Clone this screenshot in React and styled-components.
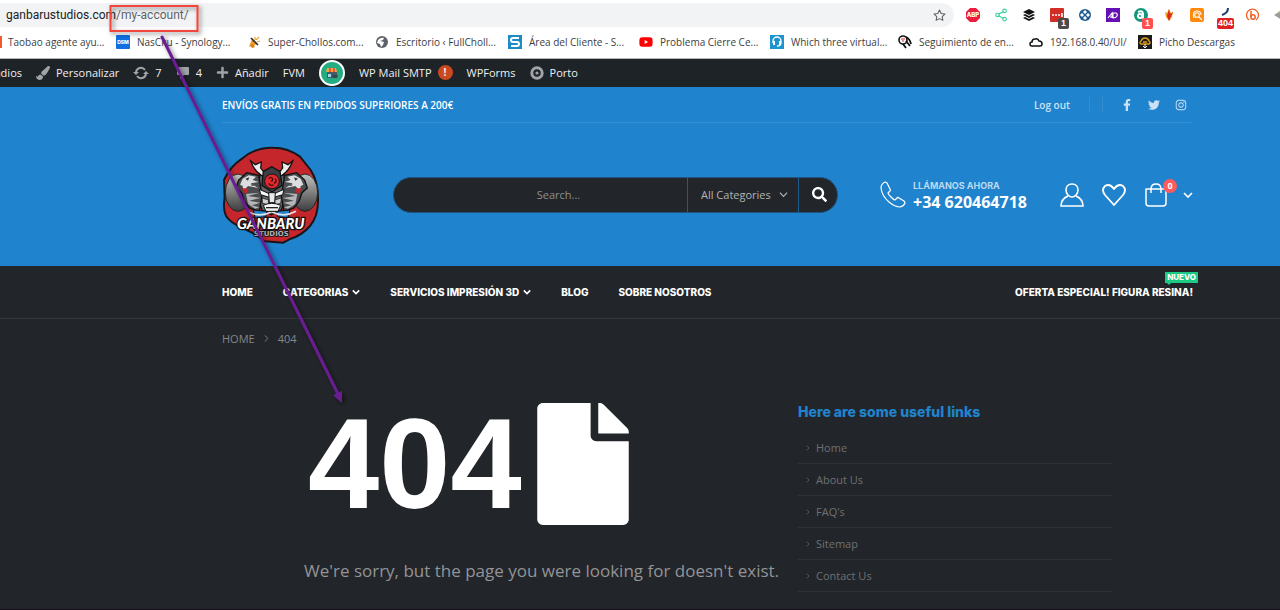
import styled, { createGlobalStyle, css } from 'styled-components';
import {
  FaFacebookF,
  FaTwitter,
  FaInstagram,
  FaSearch,
  FaPaintBrush,
  FaPlus,
  FaYoutube,
} from 'react-icons/fa';
import { FiStar, FiChevronRight, FiShare2 } from 'react-icons/fi';

const GlobalStyle = createGlobalStyle`
  * {
    box-sizing: border-box;
  }
  body {
    margin: 0;
    background: #222529;
    font-family: 'Open Sans', sans-serif;
    font-size: 11px;
  }
  a {
    color: inherit;
    text-decoration: none;
  }
  svg {
    display: block;
    flex: none;
  }
`;

const Page = styled.div`
  position: relative;
  min-height: 100vh;
  overflow: hidden;
  border-bottom: 1px solid #14101a;
`;

/* ---------- browser chrome ---------- */

const Chrome = styled.div`
  background: #fff;
  border-bottom: 1px solid #b4b6b8;
  overflow: hidden;
`;

const AddressRow = styled.div`
  display: flex;
  align-items: center;
  height: 30px;
`;

const AddressBar = styled.div`
  flex: 1;
  display: flex;
  align-items: center;
  justify-content: space-between;
  height: 24px;
  padding: 0 8px 0 6px;
  border-radius: 0 12px 12px 0;
  background: #f1f3f4;
  color: #5f6368;
  font: 12px Roboto, sans-serif;
`;

const Host = styled.span`
  color: #202124;
`;

const Extensions = styled.div`
  flex: none;
  display: flex;
  width: 326px;
  padding-left: 5px;
`;

const Extension = styled.button`
  position: relative;
  flex: none;
  display: flex;
  align-items: center;
  justify-content: center;
  width: 28px;
  height: 24px;
  padding: 0;
  border: 0;
  background: none;
`;

const ExtensionBadge = styled.span`
  position: absolute;
  right: ${({ $wide }) => ($wide ? '5px' : '2px')};
  bottom: -2px;
  padding: 0 ${({ $wide }) => ($wide ? '1px' : '3px')};
  border-radius: 2px;
  background: ${({ $bg }) => $bg};
  color: #fff;
  font-size: 9px;
  font-weight: 700;
  line-height: 11px;
`;

const Bookmarks = styled.nav`
  display: flex;
  align-items: center;
  height: 28px;
  padding-bottom: 4px;
  color: #3c4043;
  font-size: 10px;
`;

const Bookmark = styled.a`
  flex: none;
  display: flex;
  align-items: center;
  gap: 7px;
  width: ${({ $width }) => $width}px;
  white-space: nowrap;
`;

const FirstBookmark = styled(Bookmark)`
  gap: 6px;
`;

/* ---------- WordPress admin bar ---------- */

const AdminBar = styled.nav`
  display: flex;
  align-items: center;
  gap: 14px;
  height: 28px;
  background: #1d2327;
  color: #f0f0f1;
`;

const AdminItem = styled.a`
  display: flex;
  align-items: center;
  gap: 6px;
  line-height: 14px;
  padding-bottom: 1px;
  white-space: nowrap;
  svg {
    color: #a0a3a8;
  }
`;

const SiteItem = styled(AdminItem)`
  justify-content: flex-end;
  width: 22px;
  overflow: hidden;
`;

const StoreIcon = styled.span`
  display: flex;
  align-items: center;
  justify-content: center;
  width: 26px;
  height: 26px;
  border: 2px solid #fff;
  border-radius: 50%;
  background: #23ad80;
`;

const Alert = styled.span`
  width: 15px;
  border-radius: 8px;
  background: #ca4a1f;
  font-size: 10px;
  font-weight: 700;
  line-height: 15px;
  text-align: center;
`;

/* ---------- site header ---------- */

const container = css`
  padding-left: 222px;
  padding-right: 87px;
`;

const Header = styled.header`
  ${container}
  background: #2083ce;
  color: #fff;
`;

const TopBar = styled.div`
  display: flex;
  align-items: center;
  justify-content: space-between;
  height: 36px;
  border-bottom: 1px solid #338ed2;
  font-size: 10px;
  font-weight: 600;
`;

const TopLinks = styled.div`
  display: flex;
  align-items: center;
  padding-right: 6px;
  color: #cbe2f4;
`;

const LogOut = styled.a`
  padding-right: 19px;
`;

const Separators = styled.span`
  width: 14px;
  height: 16px;
  border: solid #338ed2;
  border-width: 0 1px;
`;

const Social = styled.div`
  display: flex;
  gap: 15px;
  padding-left: 18px;
`;

const HeaderMain = styled.div`
  display: flex;
  align-items: center;
  height: 143px;
`;

const SearchForm = styled.form`
  display: flex;
  width: 445px;
  height: 36px;
  margin-left: 73px;
  border: 1px solid #1f5580;
  border-radius: 18px;
  background: #222529;
  overflow: hidden;
`;

const SearchInput = styled.input`
  flex: 1;
  min-width: 0;
  padding: 0 0 0 36px;
  border: 0;
  background: none;
  color: #fff;
  font: 11px 'Open Sans', sans-serif;
  text-align: center;
  &::placeholder {
    color: #8d8f92;
  }
`;

const CategoryBox = styled.label`
  display: grid;
  grid-template-columns: 1fr 9px;
  align-items: center;
  width: 112px;
  padding: 0 10px 0 13px;
  border: solid #1c5b8b;
  border-width: 0 1px;
  color: #b2b4b6;
  svg {
    grid-area: 1 / 2;
    pointer-events: none;
  }
`;

const CategorySelect = styled.select`
  grid-area: 1 / 1 / 2 / 3;
  width: 100%;
  height: 34px;
  padding: 0;
  border: 0;
  appearance: none;
  background: none;
  color: inherit;
  font: 11px 'Open Sans', sans-serif;
`;

const IconButton = styled.button`
  display: flex;
  align-items: center;
  justify-content: center;
  padding: 0;
  border: 0;
  background: none;
  color: #fff;
`;

const SearchButton = styled(IconButton)`
  width: 38px;
  height: 34px;
  padding-left: 3px;
`;

const HeaderTools = styled.div`
  display: flex;
  align-items: center;
  margin-left: auto;
`;

const Phone = styled.a`
  display: flex;
  align-items: center;
  gap: 7px;
  width: 180px;
  white-space: nowrap;
`;

const PhoneLabel = styled.span`
  display: block;
  color: #bcdaf0;
  font: 700 9px/14px Inter, sans-serif;
`;

const PhoneNumber = styled.strong`
  display: block;
  font-size: 16px;
  line-height: 18px;
`;

const ToolIcons = styled.div`
  display: flex;
  align-items: center;
  gap: 18px;
`;

const Cart = styled(IconButton)`
  position: relative;
  gap: 15px;
`;

const CartCount = styled.span`
  position: absolute;
  top: -4px;
  left: 19px;
  width: 14px;
  border-radius: 50%;
  background: #ff5b5b;
  font: 700 9px/14px 'Open Sans', sans-serif;
`;

/* ---------- navigation ---------- */

const MainNav = styled.nav`
  ${container}
  display: flex;
  align-items: center;
  gap: 30px;
  height: 53px;
  border-bottom: 1px solid #34373b;
  color: #fff;
  font: 800 10px/16px Inter, sans-serif;
`;

const NavLink = styled.a`
  display: flex;
  align-items: center;
  gap: 4px;
  white-space: nowrap;
`;

const Offer = styled(NavLink)`
  position: relative;
  margin-left: auto;
`;

const NewTag = styled.span`
  position: absolute;
  top: -12px;
  right: -5px;
  padding: 0 2px;
  background: #1ccb83;
  font-size: 8px;
  line-height: 11px;
  &::after {
    content: '';
    position: absolute;
    top: 11px;
    left: 2px;
    border: solid transparent;
    border-width: 0 2px;
    border-top: 2px solid #1ccb83;
  }
`;

const Breadcrumb = styled.nav`
  ${container}
  display: flex;
  align-items: center;
  gap: 6px;
  height: 38px;
  color: #85878a;
`;

/* ---------- 404 content ---------- */

const Main = styled.main`
  display: flex;
  padding: 46px 168px 16px 304px;
`;

const NotFound = styled.section`
  flex: 1;
  min-width: 0;
`;

const Code = styled.h1`
  display: flex;
  align-items: center;
  gap: 15px;
  height: 122px;
  margin: 0;
  padding-left: 4px;
  color: #fff;
  font: 700 128px/122px 'Liberation Sans', sans-serif;
`;

const Message = styled.p`
  margin: 32px 0 0;
  color: #929497;
  font-size: 17px;
  line-height: 28px;
  white-space: nowrap;
`;

const Useful = styled.aside`
  flex: none;
  width: 314px;
`;

const UsefulTitle = styled.h2`
  margin: 0 0 11px;
  color: #2083ce;
  font: 800 14px/18px Inter, sans-serif;
`;

const UsefulList = styled.ul`
  margin: 0;
  padding: 0;
  list-style: none;
`;

const UsefulItem = styled.li`
  border-bottom: 1px solid #2e3135;
  a {
    display: flex;
    align-items: center;
    gap: 4px;
    height: 31px;
    padding-left: 6px;
    color: #6e7174;
  }
`;

/* arrow and box drawn over the page */
const Markup = styled.svg`
  position: absolute;
  top: 0;
  left: 0;
  pointer-events: none;
`;

const Chevron = ({ width = 8, weight = 2 }) => (
  <svg width={width} height={width} viewBox="0 0 10 10" fill="none" stroke="currentColor" strokeWidth={weight}>
    <path d="M1 3 L5 7 L9 3" />
  </svg>
);

function Logo() {
  const half = (
    <>
      <path d="M150 102 L130 98 Q108 84 98 55 L112 66 L130 58 L128 76 Q138 92 152 92Z" fill="#ececec" stroke="#111" strokeWidth="4" />
      <path d="M122 98 L86 90 L62 112 L54 136 L70 150 L78 174 L94 196 L124 206 L132 160Z" fill="#4a4c4f" stroke="#111" strokeWidth="4" />
      <path d="M66 126 L74 108 L92 98 L114 102 L104 112 L122 118 L98 122 L120 136 L90 130 L76 144 L74 130Z" fill="#dcddde" />
      <path d="M82 108 L94 104 L90 114Z M98 124 L110 128 L102 130Z" fill="#333" />
      <path d="M84 154 L126 150 L90 160 L128 166 L94 174 L126 180 L102 188 L124 194 L112 198 L90 184Z" fill="#b5b7b9" />
      <path d="M72 136 L90 138 L88 152 L76 150Z" fill="#c5262c" />
      <path d="M124 140 L156 154 L154 164 L128 156Z" fill="#f6f6f6" stroke="#111" strokeWidth="3" />
      <path d="M132 166 L152 172 L150 186 L134 182Z" fill="#cfd0d1" stroke="#111" strokeWidth="2" />
      <path d="M106 202 L146 206 L144 222 L112 226Z" fill="#2083ce" stroke="#111" strokeWidth="3" />
      <path d="M88 206 Q124 226 160 208" fill="none" stroke="#e3e3e3" strokeWidth="5" />
    </>
  );
  return (
    <svg width="98" height="98" viewBox="12 10 294 294" role="img" aria-label="Ganbaru Studios">
      <defs>
        <linearGradient id="drum" x1="0" y1="0" x2="0" y2="1">
          <stop offset="0" stopColor="#c3c3c3" />
          <stop offset="1" stopColor="#3c3c3e" />
        </linearGradient>
      </defs>
      <path d="M72 48 Q112 13 166 15 Q210 15 246 42 L278 82 Q300 116 300 166 Q302 220 276 250 Q250 280 214 290 L196 300 L140 296 L110 274 L66 252 Q38 240 24 220 Q14 196 20 166 L18 112 Q36 72 72 48Z" fill="#c5262c" stroke="#15171b" strokeWidth="6" strokeLinejoin="round" />
      <ellipse cx="60" cy="150" rx="38" ry="56" fill="url(#drum)" stroke="#222" strokeWidth="3" />
      <ellipse cx="261" cy="150" rx="38" ry="56" fill="url(#drum)" stroke="#222" strokeWidth="3" />
      <path d="M126 96 L198 96 L206 152 L190 202 L160 216 L132 202 L116 152Z" fill="#606265" stroke="#111" strokeWidth="4" />
      {half}
      <g transform="translate(322 0) scale(-1 1)">{half}</g>
      <path d="M136 86 L161 72 L186 86 L192 128 L162 148 L132 128Z" fill="#3c3e41" stroke="#111" strokeWidth="4" />
      <circle cx="162" cy="116" r="22" fill="#e3282e" stroke="#201014" strokeWidth="3" />
      <path d="M152 108 q6 -8 12 0 q0 6 -4 8 M172 108 q6 10 -4 14 M152 122 q6 10 14 4" fill="none" stroke="#3a1013" strokeWidth="4" />
      <path d="M152 150 L172 150 L170 180 L154 180Z" fill="#e8e9ea" stroke="#111" strokeWidth="3" />
      <path d="M136 188 Q160 176 188 188 L180 206 L144 206Z" fill="#f4f4f4" stroke="#111" strokeWidth="3" />
      <path d="M144 195 H180" stroke="#222" strokeWidth="4" />
      <text x="158" y="258" textAnchor="middle" fill="#fff" stroke="#111" strokeWidth="8" paintOrder="stroke" fontFamily="Lato, sans-serif" fontSize="44" fontWeight="900" fontStyle="italic">GANBARU</text>
      <text x="160" y="281" textAnchor="middle" fill="#b0b0b2" stroke="#111" strokeWidth="5" paintOrder="stroke" fontFamily="DejaVu Sans, sans-serif" fontSize="21" fontWeight="700">STUDIOS</text>
    </svg>
  );
}

const SynologyIcon = () => (
  <svg width="14" height="14" viewBox="0 0 14 14">
    <rect width="14" height="14" rx="1" fill="#0f6fe0" />
    <text x="7" y="9" textAnchor="middle" fill="#fff" fontFamily="Inter, sans-serif" fontSize="5" fontWeight="800">DSM</text>
  </svg>
);

const MegaphoneIcon = () => (
  <svg width="14" height="14" viewBox="0 0 14 14">
    <path d="M5 4 L10 9 L2 12Z" fill="#f29a1f" />
    <path d="M3 10 L5 13 L8 12 L6 9Z" fill="#e07b12" />
    <path d="M4 3 L11 10" stroke="#2a2e38" strokeWidth="1.6" />
    <path d="M8 2 L8 5 M12 2 L9 5 M13 6 L10 7" stroke="#f0a22b" strokeWidth="1.2" />
  </svg>
);

const GlobeIcon = () => (
  <svg width="14" height="14" viewBox="0 0 14 14">
    <circle cx="7" cy="7" r="6" fill="#5f6368" />
    <path d="M3 5 Q6 2 9 3 L8 5 L5 6 L9 7 L8 10 L6 12 L5 9 L2 8Z" fill="#fff" />
  </svg>
);

const SIcon = () => (
  <svg width="14" height="14" viewBox="0 0 14 14">
    <rect width="14" height="14" fill="#1d8cc4" />
    <path d="M11 3 H5 Q3 3 3 5 Q3 7 5 7 H9 Q11 7 11 9 Q11 11 9 11 H3" fill="none" stroke="#fff" strokeWidth="2" />
  </svg>
);

const HeadsetIcon = () => (
  <svg width="14" height="14" viewBox="0 0 14 14">
    <rect width="14" height="14" fill="#1d93cf" />
    <path d="M3 8 V6 a4 4 0 0 1 8 0 V8 q0 3 -4 3" fill="none" stroke="#fff" strokeWidth="1.3" />
    <path d="M3 6 h2 v4 h-2Z M9 6 h2 v4 h-2Z" fill="#fff" />
  </svg>
);

const TrackIcon = () => (
  <svg width="14" height="14" viewBox="0 0 14 14" fill="none" stroke="#111">
    <circle cx="5" cy="5" r="4" strokeWidth="1.6" />
    <path d="M5 9 L8 13 M8 2 Q12 4 13 9 M8 6 L12 11" strokeWidth="1.8" />
    <path d="M3 4 h4 M4 6 h2" stroke="#e0252b" strokeWidth="1.2" />
  </svg>
);

const CloudIcon = () => (
  <svg width="14" height="14" viewBox="0 0 14 14" fill="none" stroke="#111" strokeWidth="1.5">
    <path d="M3 11 Q1 11 1 9 Q1 7 3 7 Q3 4 6 4 Q9 3 10 6 Q13 6 13 9 Q13 11 11 11Z" />
  </svg>
);

const PichoIcon = () => (
  <svg width="14" height="14" viewBox="0 0 14 14">
    <rect width="14" height="14" fill="#1c1c1c" />
    <path d="M3 9 Q1 8 3 6 Q4 3 7 3 Q10 3 11 6 Q13 8 11 9Z" fill="none" stroke="#d99b1c" strokeWidth="1.4" />
    <path d="M5 7 h4" stroke="#d99b1c" strokeWidth="1.6" />
    <path d="M7 9 v3 M5 11 l2 2 l2 -2" stroke="#eee" fill="none" />
  </svg>
);

const bookmarks = [
  { label: 'NasCku - Synology...', icon: <SynologyIcon />, width: 131 },
  { label: 'Super-Chollos.com...', icon: <MegaphoneIcon />, width: 128 },
  { label: 'Escritorio ‹ FullCholl...', icon: <GlobeIcon />, width: 133 },
  { label: 'Área del Cliente - S...', icon: <SIcon />, width: 131 },
  { label: 'Problema Cierre Ce...', icon: <FaYoutube size={14} color="#f00" />, width: 131 },
  { label: 'Which three virtual...', icon: <HeadsetIcon />, width: 128 },
  { label: 'Seguimiento de en...', icon: <TrackIcon />, width: 131 },
  { label: '192.168.0.40/UI/', icon: <CloudIcon />, width: 109 },
  { label: 'Picho Descargas', icon: <PichoIcon />, width: 109 },
];

const extensions = [
  {
    name: 'Adblock Plus',
    icon: (
      <svg width="14" height="14" viewBox="0 0 14 14">
        <path d="M4 0 H10 L14 4 V10 L10 14 H4 L0 10 V4Z" fill="#ec1c3c" />
        <text x="7" y="9" textAnchor="middle" fill="#fff" fontFamily="Inter, sans-serif" fontSize="6" fontWeight="800">ABP</text>
      </svg>
    ),
  },
  { name: 'Share', icon: <FiShare2 size={14} color="#3fcf9b" /> },
  {
    name: 'Buffer',
    icon: (
      <svg width="14" height="14" viewBox="0 0 14 14" fill="#111">
        <path d="M7 1 L13 4 L7 7 L1 4Z" />
        <path d="M1 7 L3 6 L7 8 L11 6 L13 7 L7 10Z M1 10 L3 9 L7 11 L11 9 L13 10 L7 13Z" />
      </svg>
    ),
  },
  {
    name: 'LastPass',
    icon: (
      <svg width="14" height="14" viewBox="0 0 14 14">
        <rect width="14" height="14" rx="1" fill="#d32d27" />
        <path d="M2 7 h2 M5 7 h2 M8 7 h2 M12 5 v4" stroke="#fff" strokeWidth="1.6" />
      </svg>
    ),
    badge: { text: '1', bg: '#4a4a4a' },
  },
  {
    name: 'Guard',
    icon: (
      <svg width="14" height="14" viewBox="0 0 14 14">
        <circle cx="7" cy="7" r="6" fill="#1f5c8f" />
        <path d="M7 2 l2 2 l-2 2 l-2 -2Z M7 8 l2 2 l-2 2 l-2 -2Z M4 5 l2 2 l-2 2 l-2 -2Z M10 5 l2 2 l-2 2 l-2 -2Z" fill="#fff" />
      </svg>
    ),
  },
  {
    name: 'AD',
    icon: (
      <svg width="14" height="14" viewBox="0 0 14 14">
        <rect width="14" height="14" fill="#6410b4" />
        <path d="M2 10 L6 5 V10 M4 9 H6 M7 5 H10 Q12 6 11 8 Q10 10 7 10Z" fill="none" stroke="#fff" strokeWidth="1.1" />
      </svg>
    ),
  },
  {
    name: 'Alexa',
    icon: (
      <svg width="14" height="14" viewBox="0 0 14 14" fill="none" stroke="#fff" strokeWidth="2">
        <circle cx="7" cy="7" r="7" fill="#12957d" stroke="none" />
        <path d="M4 4 Q9 2 9 6 V11" />
        <circle cx="6" cy="8" r="2" />
      </svg>
    ),
    badge: { text: '1', bg: '#ff4f4f' },
  },
  {
    name: 'Flame',
    icon: (
      <svg width="14" height="14" viewBox="0 0 14 14">
        <path d="M7 1 L9 5 L11 4 L10 9 L7 13 L4 9 L3 4 L5 5Z" fill="#f2a01e" />
        <path d="M7 1 L8 6 L11 4 L7 13 L5 8Z" fill="#da2c1e" />
      </svg>
    ),
  },
  {
    name: 'Finder',
    icon: (
      <svg width="14" height="14" viewBox="0 0 14 14" fill="none" stroke="#fff">
        <rect width="14" height="14" rx="2" fill="#ff8a0d" stroke="none" />
        <path d="M4 10 Q2 3 7 3 Q11 3 11 7 M9 9 L12 12" strokeWidth="1.1" />
        <circle cx="7" cy="7" r="2.3" strokeWidth="1.1" />
      </svg>
    ),
  },
  {
    name: 'Broken links',
    icon: (
      <svg width="14" height="14" viewBox="0 0 14 14">
        <path d="M10 0 Q10 5 4 7" fill="none" stroke="#1d3f6e" strokeWidth="2" />
      </svg>
    ),
    badge: { text: '404', bg: '#e02020', wide: true },
  },
  {
    name: 'Bitly',
    icon: (
      <svg width="14" height="14" viewBox="0 0 14 14" fill="none" stroke="#ee6123">
        <path d="M3 12 A6 6 0 1 1 10 12" strokeWidth="1.3" />
        <path d="M5 3 V9" strokeWidth="1.5" />
        <circle cx="7" cy="9" r="2.2" strokeWidth="1.5" />
      </svg>
    ),
  },
  {
    name: 'More',
    icon: (
      <svg width="14" height="14" viewBox="0 0 14 14">
        <path d="M0 7 L8 2 V12Z" fill="#9a9c9a" />
        <path d="M4 4 L10 0 V7Z" fill="#b9cf4a" />
      </svg>
    ),
  },
];

const usefulLinks = ['Home', 'About Us', "FAQ's", 'Sitemap', 'Contact Us'];

function BrowserChrome() {
  return (
    <Chrome>
      <AddressRow>
        <AddressBar>
          <span><Host>ganbarustudios.com</Host>/my-account/</span>
          <FiStar size={13} />
        </AddressBar>
        <Extensions>
          {extensions.map(({ name, icon, badge }) => (
            <Extension key={name} aria-label={name}>
              {icon}
              {badge && <ExtensionBadge $bg={badge.bg} $wide={badge.wide}>{badge.text}</ExtensionBadge>}
            </Extension>
          ))}
        </Extensions>
      </AddressRow>
      <Bookmarks>
        <FirstBookmark href="#taobao" $width={116}>
          <svg width="2" height="12"><rect width="2" height="12" fill="#f0592a" /></svg>
          Taobao agente ayu...
        </FirstBookmark>
        {bookmarks.map(({ label, icon, width }) => (
          <Bookmark key={label} href="#bookmark" $width={width}>
            {icon}
            {label}
          </Bookmark>
        ))}
      </Bookmarks>
    </Chrome>
  );
}

function WpAdminBar() {
  return (
    <AdminBar>
      <SiteItem href="#site">udios</SiteItem>
      <AdminItem href="#customize"><FaPaintBrush size={14} />Personalizar</AdminItem>
      <AdminItem href="#updates">
        <svg width="16" height="14" viewBox="0 0 16 14" fill="none" stroke="currentColor" strokeWidth="2">
          <path d="M3 6 A5 5 0 0 1 12 4 M13 8 A5 5 0 0 1 4 10" />
          <path d="M0 6 H6 L3 9Z M10 8 H16 L13 5Z" fill="currentColor" stroke="none" />
        </svg>
        7
      </AdminItem>
      <AdminItem href="#comments">
        <svg width="14" height="14" viewBox="0 0 14 14" fill="currentColor">
          <path d="M2 1 H12 Q13 1 13 2 V8 Q13 9 12 9 H8 L4 13 V9 H2 Q1 9 1 8 V2 Q1 1 2 1Z" />
        </svg>
        4
      </AdminItem>
      <AdminItem href="#new"><FaPlus size={13} />Añadir</AdminItem>
      <AdminItem href="#fvm">FVM</AdminItem>
      <StoreIcon>
        <svg width="14" height="12" viewBox="0 0 14 12">
          <rect x="2" y="5" width="10" height="6" fill="#455a64" />
          <path d="M2 1 H11 L12 5 H1Z" fill="#f2a73b" />
          <path d="M4 1 H6 V5 H4Z M8 1 H10 V5 H8Z" fill="#e9573f" />
          <path d="M3 7 h3 v3 h-3Z" fill="#9fd6f2" />
          <path d="M7 8 h6 l-1 3 h-4Z" fill="#37474f" />
        </svg>
      </StoreIcon>
      <AdminItem href="#mail">WP Mail SMTP<Alert>!</Alert></AdminItem>
      <AdminItem href="#forms">WPForms</AdminItem>
      <AdminItem href="#porto">
        <svg width="14" height="14" viewBox="0 0 14 14" fill="none" stroke="currentColor">
          <circle cx="7" cy="7" r="5.2" strokeWidth="3" />
          <circle cx="7" cy="7" r="1.6" fill="currentColor" stroke="none" />
        </svg>
        Porto
      </AdminItem>
    </AdminBar>
  );
}

function SiteHeader() {
  return (
    <Header>
      <TopBar>
        <span>ENVÍOS GRATIS EN PEDIDOS SUPERIORES A 200€</span>
        <TopLinks>
          <LogOut href="#logout">Log out</LogOut>
          <Separators />
          <Social>
            <a href="#facebook" aria-label="Facebook"><FaFacebookF size={12} /></a>
            <a href="#twitter" aria-label="Twitter"><FaTwitter size={12} /></a>
            <a href="#instagram" aria-label="Instagram"><FaInstagram size={12} /></a>
          </Social>
        </TopLinks>
      </TopBar>
      <HeaderMain>
        <a href="#home"><Logo /></a>
        <SearchForm onSubmit={(e) => e.preventDefault()}>
          <SearchInput type="text" placeholder="Search..." aria-label="Search" />
          <CategoryBox>
            <CategorySelect aria-label="Category">
              <option>All Categories</option>
            </CategorySelect>
            <Chevron width={9} weight={1.3} />
          </CategoryBox>
          <SearchButton aria-label="Search"><FaSearch size={15} /></SearchButton>
        </SearchForm>
        <HeaderTools>
          <Phone href="tel:+34620464718">
            <svg width="26" height="27" viewBox="0 0 26 27" fill="none" stroke="#fff" strokeWidth="1.2" strokeLinejoin="round">
              <path d="M5 1 Q1 3 1 7 Q2 15 9 21 Q15 26 20 26 Q24 25 25 22 Q25 21 24 20 L19 17 Q18 16 17 17 L15 19 Q14 19 11 16 Q8 13 8 12 L10 10 Q11 9 10 8 L7 2 Q6 1 5 1Z" />
            </svg>
            <span>
              <PhoneLabel>LLÁMANOS AHORA</PhoneLabel>
              <PhoneNumber>+34 620464718</PhoneNumber>
            </span>
          </Phone>
          <ToolIcons>
            <IconButton aria-label="Account">
              <svg width="24" height="24" viewBox="0 0 24 24" fill="none" stroke="#fff" strokeWidth="1.6">
                <path d="M12 1 C8 1 6 4 6 7 C6 11 9 14 12 14 C15 14 18 11 18 7 C18 4 16 1 12 1Z" />
                <path d="M8 13 Q1 16 1 23 H23 Q23 16 16 13" />
              </svg>
            </IconButton>
            <IconButton aria-label="Wishlist">
              <svg width="24" height="24" viewBox="0 0 24 24" fill="none" stroke="#fff" strokeWidth="1.8" strokeLinejoin="round">
                <path d="M12 22 L3 12 Q-1 7 3 3 Q8 0 12 6 Q16 0 21 3 Q25 7 21 12Z" />
              </svg>
            </IconButton>
            <Cart aria-label="Cart">
              <svg width="24" height="24" viewBox="0 0 24 24" fill="none" stroke="#fff" strokeWidth="1.5">
                <path d="M2 6 H22 V20 Q22 23 19 23 H5 Q2 23 2 20Z" strokeLinejoin="round" />
                <path d="M7 10 V6 Q7 1 12 1 Q17 1 17 6 V10" />
              </svg>
              <CartCount>0</CartCount>
              <Chevron width={10} weight={1.6} />
            </Cart>
          </ToolIcons>
        </HeaderTools>
      </HeaderMain>
    </Header>
  );
}

export default function App() {
  return (
    <Page>
      <GlobalStyle />
      <BrowserChrome />
      <WpAdminBar />
      <SiteHeader />
      <MainNav>
        <NavLink href="#home">HOME</NavLink>
        <NavLink href="#categorias">CATEGORIAS<Chevron /></NavLink>
        <NavLink href="#servicios">SERVICIOS IMPRESIÓN 3D<Chevron /></NavLink>
        <NavLink href="#blog">BLOG</NavLink>
        <NavLink href="#nosotros">SOBRE NOSOTROS</NavLink>
        <Offer href="#oferta">OFERTA ESPECIAL! FIGURA RESINA!<NewTag>NUEVO</NewTag></Offer>
      </MainNav>
      <Breadcrumb>
        <a href="#home">HOME</a>
        <FiChevronRight size={11} />
        <span>404</span>
      </Breadcrumb>
      <Main>
        <NotFound>
          <Code>
            404
            <svg width="92" height="122" viewBox="0 0 384 512" fill="#fff">
              <path d="M224 136V0H24C10.700 0 0 10.700 0 24v464c0 13.300 10.700 24 24 24h336c13.300 0 24-10.700 24-24V160H248c-13.200 0-24-10.800-24-24zm160-14.100v6.100H256V0h6.100c6.400 0 12.500 2.500 17 7l97.900 98c4.500 4.500 7 10.600 7 16.900z" />
            </svg>
          </Code>
          <Message>We're sorry, but the page you were looking for doesn't exist.</Message>
        </NotFound>
        <Useful>
          <UsefulTitle>Here are some useful links</UsefulTitle>
          <UsefulList>
            {usefulLinks.map((label) => (
              <UsefulItem key={label}>
                <a href="#link"><FiChevronRight size={8} />{label}</a>
              </UsefulItem>
            ))}
          </UsefulList>
        </Useful>
      </Main>
      <Markup width="360" height="420" viewBox="0 0 360 420">
        <defs>
          <filter id="shadow" x="-20%" y="-20%" width="140%" height="140%">
            <feDropShadow dx="2" dy="2" stdDeviation="2" floodOpacity="0.5" />
          </filter>
        </defs>
        <g filter="url(#shadow)">
          <rect x="110.500" y="6" width="87" height="25" fill="none" stroke="#f4443e" strokeWidth="2" />
          <path d="M162 37 L338 394" stroke="#6a1f93" strokeWidth="3" strokeLinecap="round" />
          <path d="M342 403 L333 395 L342 391Z" fill="#6a1f93" />
        </g>
      </Markup>
    </Page>
  );
}
